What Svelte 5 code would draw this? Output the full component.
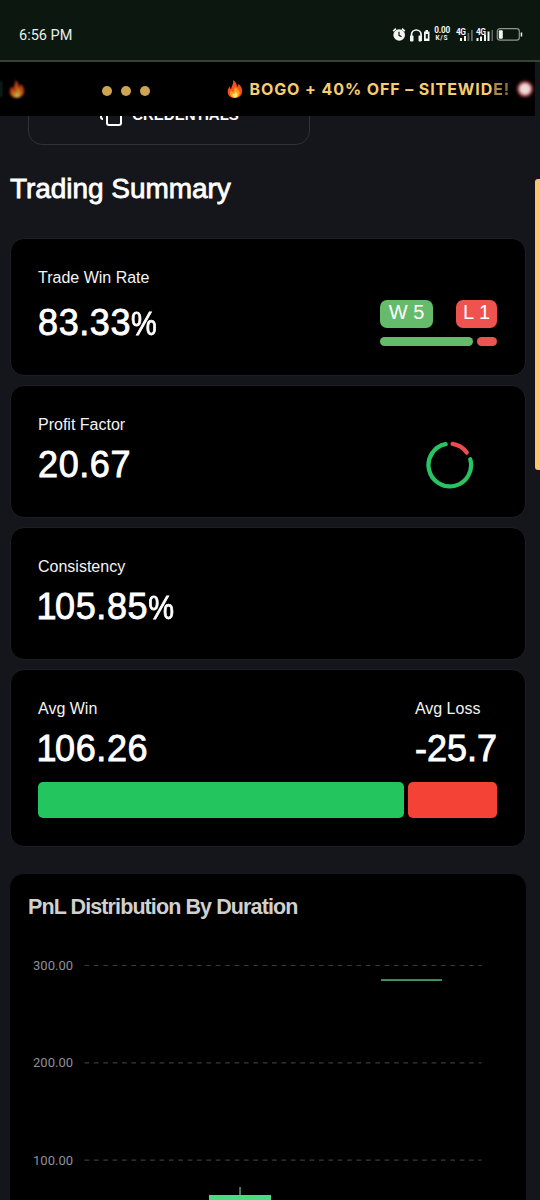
<script>
  const stats = [
    { label: 'Trade Win Rate', value: '83.33%', kind: 'rate' },
    { label: 'Profit Factor', value: '20.67', kind: 'ring' },
    { label: 'Consistency', value: '105.85%', kind: 'plain' }
  ];
  const ticks = [
    { label: '300.00', y: 91.5 },
    { label: '200.00', y: 188.8 },
    { label: '100.00', y: 286.2 }
  ];
</script>

{#snippet flame()}
  <svg class="flame" viewBox="0 0 16 19">
    <path fill="#f4511e" d="M6 0C9 2 10 5 10.200 7.500C11.500 6.600 11.800 5.200 11.500 4C14.500 6.500 16 9.500 15.500 12.700C15 16.500 12 19 8 19C3.800 19 .6 16.500.3 12.800C.1 10 1.500 8 2.600 6.500C2.700 8 3 9 4 9.600C4 6.500 7 4 6 0Z" />
    <path fill="#ff9f1c" d="M8.200 7C11 10 14 11.500 12.800 15C12 17.500 10 18.700 8 18.700C4.800 18.700 2.700 16.800 2.800 14C2.900 12.500 3.600 11.400 4.300 10.800C4.600 12 5.300 12.500 6 12.400C7.500 11.500 6.800 9 8.200 7Z" />
    <path fill="#ffe36b" d="M8.500 12C9.500 13.500 11 14.200 10.700 16C10.400 17.800 9 18.500 8 18.500C6.300 18.500 5 17.400 5.200 15.700C5.400 14.500 6 14.200 6.400 14.900C7.200 15.300 8.300 13.800 8.500 12Z" />
  </svg>
{/snippet}

{#snippet figure(text)}
  <div class="value">{#each text as ch}<span class:one={ch === '1'} class:pct={ch === '%'}>{ch}</span>{/each}</div>
{/snippet}

<div class="screen">
  <header class="status">
    <span class="time">6:56 PM</span>
    <svg class="icons" width="132" height="20" viewBox="0 0 132 20">
      <g fill="none" stroke="#f2f5f2">
        <path d="M1.200 4.200L4 1.700M10 1.700L12.800 4.200" stroke-width="1.700" />
        <path d="M19.500 14V7.800a4.800 4.800 0 0 1 9.600 0V14" stroke-width="1.700" />
        <rect x="105.300" y="1.700" width="22" height="11.500" rx="2.700" stroke="#8c958e" stroke-width="1.200" />
      </g>
      <g fill="#f2f5f2">
        <circle cx="7.200" cy="8" r="5.800" />
        <rect x="18" y="8.500" width="3.500" height="6" rx="1" />
        <rect x="26.500" y="8.500" width="3" height="6" rx="1" />
        <path d="M33.500 4.500v-1.500h2.500v1.500h1.500v9.500h-5.500v-9.500z" />
        <rect x="106.800" y="3.200" width="4" height="8.500" rx="1" />
        <rect x="128.700" y="5.500" width="1.500" height="4" />
        <rect x="68" y="11" width="2" height="3" />
        <rect x="72" y="9" width="2" height="5" />
        <rect x="84.500" y="11" width="2" height="3" />
        <rect x="88" y="9.500" width="2" height="4.500" />
        <rect x="92" y="7.500" width="2" height="6.500" />
        <rect x="95.500" y="4.500" width="2" height="9.500" />
      </g>
      <g fill="#606a63">
        <rect x="75.500" y="6" width="1.800" height="8" />
        <rect x="79" y="3" width="1.800" height="11" />
        <rect x="99.500" y="3" width="1.500" height="11" />
      </g>
      <path d="M7 4.800v3.500l2.500 1.500" fill="none" stroke="#0c1710" stroke-width="1.200" />
      <rect x="33.800" y="7" width="2" height="4.500" fill="#0c1710" />
      <g fill="#f2f5f2" font-family="Roboto, sans-serif" font-weight="700">
        <text x="42.300" y="6.300" font-size="8.200" textLength="16">0.00</text>
        <text x="43.500" y="13" font-size="6.500" textLength="12">K/S</text>
        <text x="64" y="7.500" font-size="8.300" textLength="10">4G</text>
        <text x="84" y="7.500" font-size="8.300" textLength="10">4G</text>
      </g>
    </svg>
  </header>

  <div class="banner">
    <div class="edge"><i></i>{@render flame()}</div>
    <div class="dots"><i></i><i></i><i></i></div>
    {@render flame()}
    <span class="promo">BOGO + 40% OFF – SITEWID<span class="dim">E</span><span class="dimmer">!</span></span>
    <div class="alarm"></div>
  </div>

  <main>
    <div class="credentials">
      <svg width="24" height="24" viewBox="0 0 24 24" fill="none" stroke="#fff" stroke-width="2">
        <rect x="8" y="8" width="14" height="14" rx="2" />
        <path d="M4 16c-1.100 0-2-.9-2-2V4c0-1.100.9-2 2-2h10c1.100 0 2 .9 2 2" />
      </svg>
      <span>CREDENTIALS</span>
    </div>

    <h1>Trading Summary</h1>

    <section class="cards">
      {#each stats as s}
        <article class="card {s.kind}">
          <div>
            <div class="label">{s.label}</div>
            {@render figure(s.value)}
          </div>
          {#if s.kind === 'rate'}
            <div class="winloss">
              <div class="badges"><span class="w">W 5</span><span class="l">L 1</span></div>
              <div class="ratio"><i></i><i></i></div>
            </div>
          {:else if s.kind === 'ring'}
            <svg class="donut" width="48" height="48" viewBox="0 0 48 48" fill="none" stroke-width="4.300" stroke-linecap="round">
              <path stroke="#27c461" d="M44.300 18.300A21.300 21.300 0 1 1 19.600 3.200" />
              <path stroke="#ee4b50" d="M26.600 2.800A21.300 21.300 0 0 1 40.700 11.400" />
            </svg>
          {/if}
        </article>
      {/each}
      <article class="card average">
        <div class="pair">
          <div><div class="label">Avg Win</div>{@render figure('106.26')}</div>
          <div class="loss"><div class="label">Avg Loss</div>{@render figure('-25.7')}</div>
        </div>
        <div class="split"><i></i><i></i></div>
      </article>
    </section>

    <section class="chart">
      <h2>PnL Distribution By Duration</h2>
      <svg width="516" height="326" viewBox="0 0 516 326">
        {#each ticks as t}
          <text x="23" y={t.y + 4.6} textLength="40">{t.label}</text>
          <line x1="74.500" x2="471.500" y1={t.y} y2={t.y} stroke="#3a3a3a" stroke-width="1.200" stroke-dasharray="4.700 4.680" />
        {/each}
        <rect x="371" y="105.300" width="61" height="1.500" fill="#50bd78" />
        <rect x="229.300" y="313" width="1.500" height="8" fill="#5c9c78" />
        <rect x="199" y="321" width="62" height="5" fill="#4bdc7e" />
      </svg>
    </section>
  </main>
  <div class="scrollbar"></div>
</div>

<style>
  :global(body) { margin: 0; background: #15161b; }
  .screen {
    position: relative;
    width: 540px;
    height: 1200px;
    overflow: hidden;
    display: flex;
    flex-direction: column;
    background: #15161b;
    color: #fff;
    font-family: "Liberation Sans", Arial, sans-serif;
  }
  .status {
    flex: none;
    box-sizing: border-box;
    height: 62px;
    padding: 10px 16px 0 19px;
    display: flex;
    align-items: center;
    justify-content: space-between;
    background: #0c1710;
    border-bottom: 2px solid #344237;
  }
  .time { font: 400 14.500px Roboto, sans-serif; color: #e9efea; }
  .icons { overflow: visible; margin-top: 4px; }
  .banner {
    flex: none;
    width: 535px;
    height: 54px;
    display: flex;
    align-items: center;
    background: #000;
    overflow: hidden;
  }
  .flame { display: block; flex: none; width: 16px; height: 18px; margin-right: 7px; }
  .edge { width: 102px; flex: none; display: flex; align-items: center; filter: blur(1.2px); opacity: .75; }
  .edge i { width: 2px; height: 16px; margin-right: 7px; background: #173a31; }
  .dots { display: flex; gap: 9px; width: 124.500px; flex: none; padding-top: 3px; }
  .dots i { width: 10px; height: 10px; border-radius: 50%; background: #cda453; }
  .promo { flex: none; width: 262px; white-space: pre; font-family: Inter, sans-serif; font-size: 16px; font-weight: 700; letter-spacing: .9px; color: #f7cd6e; }
  .dim { color: #a8894a; filter: blur(.5px); }
  .dimmer { color: #8a713e; filter: blur(.7px); }
  .alarm { flex: none; width: 12px; height: 12px; margin-left: 5px; border-radius: 50%; background: #efdada; border: 2px solid #a33c42; filter: blur(1.5px); }
  main { flex: 1; overflow: hidden; display: flex; flex-direction: column; }
  .credentials {
    flex: none;
    box-sizing: border-box;
    width: 282px;
    height: 58px;
    padding-bottom: 3px;
    margin: -29px 0 0 28px;
    border: 1px solid #303137;
    border-radius: 14px;
    display: flex;
    align-items: center;
    justify-content: center;
    gap: 9px;
    font-size: 15px;
    font-weight: 700;
  }
  h1 { margin: 28px 0 33px 10px; font-size: 28px; line-height: 32px; font-weight: 400; letter-spacing: -.05px; -webkit-text-stroke: .8px #fff; }
  .cards { display: flex; flex-direction: column; gap: 9px; padding-left: 10px; }
  .card {
    box-sizing: border-box;
    width: 516px;
    height: 133px;
    padding: 29px 28px 0 27px;
    border: 1px solid #1e1f24;
    border-radius: 14px;
    background: #000;
    display: flex;
    justify-content: space-between;
  }
  .rate { height: 138px; }
  .label { font-size: 16px; line-height: 20px; color: #f4f4f4; }
  .value { height: 40px; margin-top: 10px; font-size: 36px; line-height: 40px; white-space: nowrap; letter-spacing: .6px; -webkit-text-stroke: .85px #fff; }
  .one { margin-left: -1.500px; letter-spacing: -1.500px; }
  .pct { font-size: 29px; letter-spacing: 0; -webkit-text-stroke-width: .7px; display: inline-block; transform: scaleY(1.14); transform-origin: 50% 79%; }
  .loss .value { letter-spacing: 0; }
  .rate .value { margin-top: 15px; }
  .winloss { width: 117px; padding-top: 32px; }
  .badges { display: flex; justify-content: space-between; }
  .badges span { box-sizing: border-box; height: 28px; border-radius: 7px; text-align: center; font-size: 20px; line-height: 25px; }
  .w { width: 53px; background: #66bb6a; }
  .l { width: 41px; background: #ef5350; }
  .ratio { display: flex; gap: 4px; margin-top: 9px; }
  .ratio i { width: 20px; height: 9px; border-radius: 5px; background: #ef5350; }
  .ratio i:first-child { flex: 1; background: #66bb6a; }
  .donut { margin: 26px 23px 0 0; }
  .average { height: 178px; flex-direction: column; justify-content: flex-start; }
  .pair { display: flex; justify-content: space-between; }
  .split { display: flex; gap: 4px; margin-top: 13px; }
  .split i { width: 89px; height: 36px; border-radius: 5px; background: #f44336; }
  .split i:first-child { flex: 1; background: #22c55e; }
  .chart { flex: none; width: 516px; height: 326px; margin: 27px 0 0 10px; border-radius: 14px 14px 0 0; background: #000; display: grid; }
  .chart > * { grid-area: 1 / 1; }
  h2 { margin: 20px 0 0 18px; font-size: 21.500px; line-height: 26px; font-weight: 700; letter-spacing: -.9px; color: #d0d0d0; }
  .chart text { font: 400 13px Roboto, sans-serif; fill: #8d909b; }
  .scrollbar { position: absolute; right: 0; top: 179px; width: 5px; height: 291px; border-radius: 3px 0 0 3px; background: #fdc66a; }
</style>
